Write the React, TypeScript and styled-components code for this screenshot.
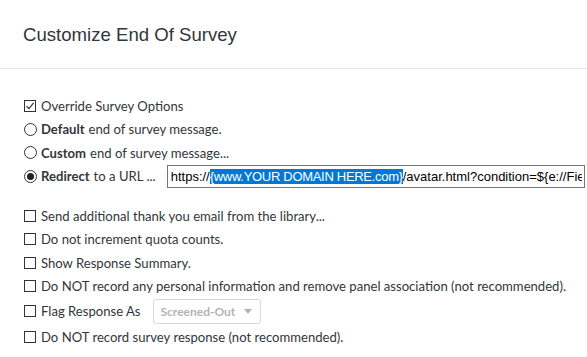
import React from "react";
import styled, { createGlobalStyle } from "styled-components";

const Global = createGlobalStyle`
  html, body { margin: 0; padding: 0; background: #fff; }
  body { font-family: Lato, "Liberation Sans", sans-serif; color: #32363a; }
`;

const Page = styled.div`
  width: 587px;
  height: 357px;
  overflow: hidden;
`;

const Header = styled.div`
  height: 69px;
  border-bottom: 1px solid #e6e6e6;
  display: flex;
  align-items: center;
  padding: 2px 0 0 23px;
  box-sizing: border-box;
`;

const Title = styled.h1`
  margin: 0;
  font-family: "Liberation Sans", Arial, sans-serif;
  font-weight: 400;
  font-size: 18.6px;
  color: #32363a;
`;

const Body = styled.div`
  padding: 25px 2px 0 24px;
  display: flex;
  flex-direction: column;
`;

const Group = styled.div<{ $gap?: number }>`
  display: flex;
  flex-direction: column;
  margin-bottom: ${(p) => p.$gap ?? 0}px;
`;

const Row = styled.label<{ $h?: number }>`
  display: flex;
  align-items: center;
  height: ${(p) => p.$h ?? 23.5}px;
  font-size: 13.1px;
  color: #32363a;
  white-space: nowrap;
`;

const Box = styled.span`
  width: 12px;
  height: 12px;
  border: 1px solid #333;
  box-sizing: border-box;
  margin-right: 5px;
  display: inline-flex;
  align-items: center;
  justify-content: center;
  flex: none;
`;

const Radio = styled.span<{ $on?: boolean }>`
  width: 13px;
  height: 13px;
  border: 1px solid #333;
  border-radius: 50%;
  box-sizing: border-box;
  margin-right: 4px;
  display: inline-flex;
  align-items: center;
  justify-content: center;
  flex: none;
  &::after {
    content: "";
    display: ${(p) => (p.$on ? "block" : "none")};
    width: 7px;
    height: 7px;
    border-radius: 50%;
    background: #222;
  }
`;

const B = styled.b`
  font-weight: 700;
  margin-right: 4px;
`;

const UrlInput = styled.div`
  margin-left: 11px;
  height: 23px;
  flex: 1;
  min-width: 0;
  border: 1px solid #767676;
  box-sizing: border-box;
  display: flex;
  align-items: center;
  padding: 0 2px 0 3px;
  font-family: "Liberation Sans", Arial, sans-serif;
  font-size: 13px;
  color: #000;
  overflow: hidden;
`;

const UrlText = styled.span`
  white-space: nowrap;
  overflow: hidden;
`;

const Sel = styled.span`
  background: #0078d7;
  color: #fff;
  letter-spacing: -0.3px;
`;

const Dropdown = styled.div`
  margin-left: 12px;
  width: 108px;
  height: 25px;
  border: 1px solid #d9d9d9;
  border-radius: 3px;
  box-sizing: border-box;
  display: flex;
  align-items: center;
  padding-left: 7px;
  gap: 9px;
  font-size: 12px;
  font-weight: 700;
  color: #b3b3b3;
`;

const Caret = styled.span`
  width: 0;
  height: 0;
  border-left: 4px solid transparent;
  border-right: 4px solid transparent;
  border-top: 5px solid #b3b3b3;
`;

const Check = ({ on }: { on?: boolean }) => (
  <Box>
    {on && (
      <svg width="10" height="10" viewBox="0 0 10 10">
        <path d="M1.5 5.2 L4 7.6 L8.6 1.8" fill="none" stroke="#333" strokeWidth="1.2" />
      </svg>
    )}
  </Box>
);

export default function App() {
  return (
    <Page>
      <Global />
      <Header>
        <Title>Customize End Of Survey</Title>
      </Header>
      <Body>
        <Group $gap={16}>
          <Row>
            <Check on />
            Override Survey Options
          </Row>
          <Row>
            <Radio />
            <B>Default</B> end of survey message.
          </Row>
          <Row>
            <Radio />
            <B>Custom</B> end of survey message...
          </Row>
          <Row>
            <Radio $on />
            <B>Redirect</B> to a URL ...
            <UrlInput>
              <UrlText>
                https://<Sel>{"{www.YOUR DOMAIN HERE.com}"}</Sel>/avatar.html?condition=${"{e://Field/condition}"}
              </UrlText>
            </UrlInput>
          </Row>
        </Group>
        <Group>
          <Row>
            <Check />
            Send additional thank you email from the library...
          </Row>
          <Row>
            <Check />
            Do not increment quota counts.
          </Row>
          <Row>
            <Check />
            Show Response Summary.
          </Row>
          <Row>
            <Check />
            Do NOT record any personal information and remove panel association (not recommended).
          </Row>
          <Row $h={26}>
            <Check />
            Flag Response As
            <Dropdown>
              Screened-Out <Caret />
            </Dropdown>
          </Row>
          <Row $h={26}>
            <Check />
            Do NOT record survey response (not recommended).
          </Row>
        </Group>
      </Body>
    </Page>
  );
}
